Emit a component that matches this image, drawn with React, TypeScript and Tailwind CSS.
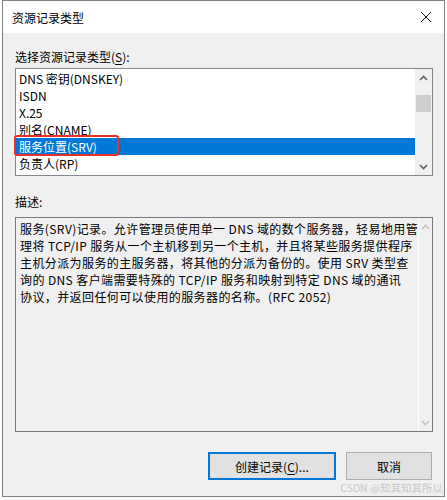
import React from "react";

const font = "font-['Noto_Sans_CJK_SC','Noto_Sans',sans-serif]";

const records = [
  "DNS 密钥(DNSKEY)",
  "ISDN",
  "X.25",
  "别名(CNAME)",
  "服务位置(SRV)",
  "负责人(RP)",
];

const descLines = [
  "服务(SRV)记录。允许管理员使用单一 DNS 域的数个服务器，轻易地用管",
  "理将 TCP/IP 服务从一个主机移到另一个主机，并且将某些服务提供程序",
  "主机分派为服务的主服务器，将其他的分派为备份的。使用 SRV 类型查",
  "询的 DNS 客户端需要特殊的 TCP/IP 服务和映射到特定 DNS 域的通讯",
  "协议，并返回任何可以使用的服务器的名称。(RFC 2052)",
];

function Chevron({ up, color }: { up?: boolean; color: string }) {
  return (
    <svg width="9" height="6" viewBox="0 0 9 6">
      <path
        d={up ? "M1 5 L4.5 1.5 L8 5" : "M1 1 L4.5 4.5 L8 1"}
        fill="none"
        stroke={color}
        strokeWidth="1.6"
      />
    </svg>
  );
}

export default function App() {
  return (
    <div className={`w-[447px] h-[500px] bg-white relative ${font} text-[12px] text-black`}>
      <div className="ml-[2px] w-[443px] h-[497px] border border-[#7f7f7f] flex flex-col">
        {/* title bar */}
        <div className="h-[32px] bg-white flex items-center justify-between pl-[9px] pr-[10px]">
          <span className="leading-[17px]">资源记录类型</span>
          <svg width="12" height="12" viewBox="0 0 12 12" className="mr-[2px]">
            <path d="M1 1 L11 11 M11 1 L1 11" stroke="#111" strokeWidth="1" />
          </svg>
        </div>

        <div className="flex-1 bg-[#f0f0f0] pl-[12px] flex flex-col">
          <div className="mt-[15px] leading-[17px]">
            选择资源记录类型(<span className="underline underline-offset-2">S</span>):
          </div>

          {/* record list */}
          <div className="relative mt-[3px] w-[418px] h-[108px] border border-[#828790] bg-white flex">
            <div className="flex-1 pt-[1px]">
              {records.map((r, i) => (
                <div
                  key={r}
                  className={`h-[17px] leading-[17px] pl-[3px] whitespace-nowrap ${
                    i === 4 ? "bg-[#0078d7] text-white" : ""
                  }`}
                >
                  {r}
                </div>
              ))}
            </div>
            <div className="w-[17px] bg-[#f0f0f0] flex flex-col">
              <div className="h-[17px] flex items-center justify-center">
                <Chevron up color="#606060" />
              </div>
              <div className="h-[9px]" />
              <div className="h-[17px] mx-[1px] bg-[#cdcdcd]" />
              <div className="flex-1" />
              <div className="h-[17px] flex items-center justify-center">
                <Chevron color="#606060" />
              </div>
            </div>
            <div className="absolute left-[-2px] top-[66px] w-[105px] h-[21px] border-2 border-[#e8302a] rounded-[3px]" />
          </div>

          <div className="mt-[17px] leading-[17px]">描述:</div>

          {/* description */}
          <div className="mt-[7px] w-[418px] h-[215px] border border-[#7a7a7a] bg-[#f0f0f0] flex">
            <div className="flex-1 pl-[4px] pt-[2px]">
              {descLines.map((l) => (
                <div key={l} className="h-[17px] leading-[17px] whitespace-nowrap tracking-[0.4px]">
                  {l}
                </div>
              ))}
            </div>
            <div className="w-[18px] border-l border-white flex flex-col">
              <div className="h-[17px] flex items-center justify-center">
                <Chevron up color="#c4c4c4" />
              </div>
              <div className="flex-1" />
              <div className="h-[17px] flex items-center justify-center">
                <Chevron color="#c4c4c4" />
              </div>
            </div>
          </div>

          {/* buttons */}
          <div className="mt-[20px] w-[418px] flex justify-end gap-[10px] pr-[1px]">
            <button className="w-[128px] h-[28px] border-2 border-[#0078d7] bg-[#e1e1e1] leading-[17px]">
              创建记录(<span className="underline underline-offset-2">C</span>)...
            </button>
            <button className="w-[86px] h-[28px] border border-[#adadad] bg-[#e1e1e1] leading-[17px]">
              取消
            </button>
          </div>
        </div>
      </div>
      <div className="absolute right-[4px] top-[480px] text-[10.5px] leading-[16px] text-[#c9c9c9] whitespace-nowrap">
        CSDN @知其知其所以
      </div>
    </div>
  );
}
